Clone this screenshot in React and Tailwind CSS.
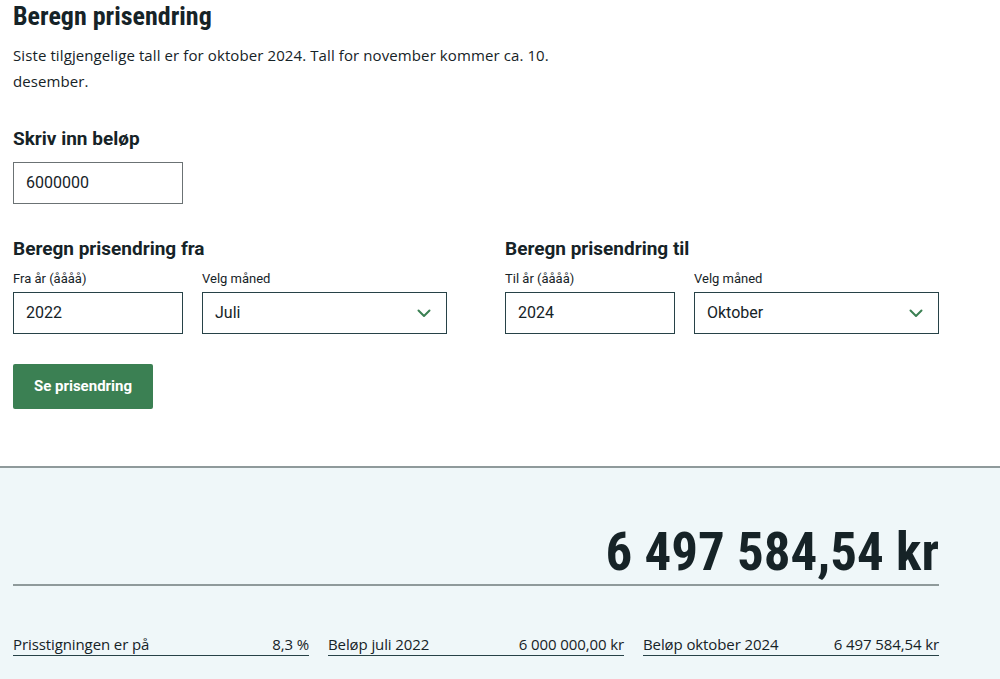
import React from "react";

const roboto = { fontFamily: "Roboto, 'Liberation Sans', sans-serif" };

const Chevron = () => (
  <svg width="14" height="9" viewBox="0 0 14 9" fill="none" className="shrink-0">
    <path d="M1.5 1.5l5.5 5.5 5.5-5.5" stroke="#3b8053" strokeWidth="2" strokeLinecap="round" strokeLinejoin="round" />
  </svg>
);

const YearMonth = ({ title, yearLabel, year, month }) => (
  <div className="w-[434px]">
    <h3 className="font-['Roboto',sans-serif] text-[19px] font-bold leading-6 text-[#162327]">{title}</h3>
    <div className="mt-2 flex gap-[19px]">
      <div className="w-[170px]">
        <label className="block font-['Roboto',sans-serif] text-[13px] leading-5 text-[#162327]">{yearLabel}</label>
        <div className="mt-[3px] flex h-[42px] items-center border border-[#274247] px-3 font-['Roboto',sans-serif] text-[16px] text-[#162327]">
          {year}
        </div>
      </div>
      <div className="w-[245px]">
        <label className="block font-['Roboto',sans-serif] text-[13px] leading-5 text-[#162327]">Velg måned</label>
        <div className="mt-[3px] flex h-[42px] items-center justify-between border border-[#274247] pl-3 pr-[15px] font-['Roboto',sans-serif] text-[16px] text-[#162327]">
          <span>{month}</span>
          <Chevron />
        </div>
      </div>
    </div>
  </div>
);

const Stat = ({ label, value }) => (
  <div className="flex w-[296px] items-center justify-between border-b border-[#274247] font-['Open_Sans',sans-serif] text-[15px] leading-[22px] tracking-[-0.1px] text-[#162327]">
    <span>{label}</span>
    <span>{value}</span>
  </div>
);

export default function App() {
  return (
    <div className="min-h-[679px] bg-white">
      <div className="px-[13px] pb-[57px]">
        <h1 className="font-['Roboto',sans-serif] text-[26px] font-bold leading-8 text-[#162327] [font-stretch:condensed]">
          Beregn prisendring
        </h1>
        <p className="mt-[10px] w-[560px] font-['Open_Sans',sans-serif] text-[15px] leading-[26px] tracking-[0.1px] text-[#162327]">
          Siste tilgjengelige tall er for oktober 2024. Tall for november kommer ca. 10. desember.
        </p>

        <h3 className="mt-[33px] font-['Roboto',sans-serif] text-[19px] font-bold leading-6 text-[#162327]">Skriv inn beløp</h3>
        <div className="mt-[11px] flex h-[42px] w-[170px] items-center border border-[#6b7274] px-3 font-['Roboto',sans-serif] text-[16px] text-[#162327]">
          6000000
        </div>

        <div className="mt-[33px] flex gap-[58px]">
          <YearMonth title="Beregn prisendring fra" yearLabel="Fra år (åååå)" year="2022" month="Juli" />
          <YearMonth title="Beregn prisendring til" yearLabel="Til år (åååå)" year="2024" month="Oktober" />
        </div>

        <button
          style={roboto}
          className="mt-[30px] h-[45px] w-[140px] rounded-[2px] bg-[#3b8053] text-[15px] font-bold text-white"
        >
          Se prisendring
        </button>
      </div>

      <div className="border-t-2 border-[#8f9a9b] bg-[#eff7f9] px-[13px] pb-6 pt-[52px]">
        <div className="w-[926px] border-b-2 border-[#8f9a9b] text-right font-['Roboto',sans-serif] text-[53px] font-bold leading-[64px] text-[#162327] [font-stretch:condensed]">
          6 497 584,54 kr
        </div>
        <div className="mt-[47px] flex gap-[19px]">
          <Stat label="Prisstigningen er på" value="8,3 %" />
          <Stat label="Beløp juli 2022" value="6 000 000,00 kr" />
          <Stat label="Beløp oktober 2024" value="6 497 584,54 kr" />
        </div>
      </div>
    </div>
  );
}
